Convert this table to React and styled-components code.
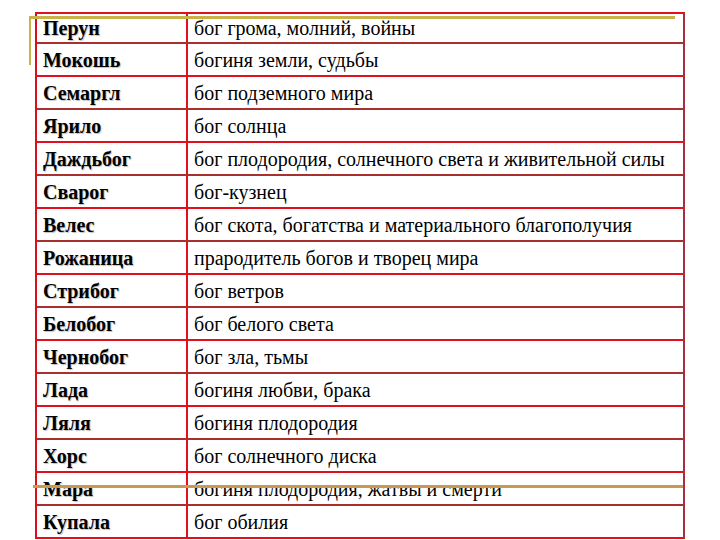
import React from 'react'
import styled, { createGlobalStyle } from 'styled-components'

const GlobalStyle = createGlobalStyle`
  html, body {
    margin: 0;
    padding: 0;
    background: #fff;
  }
  body {
    font-family: 'Liberation Serif', 'Times New Roman', serif;
    color: #000;
  }
`

const Page = styled.main`
  width: 720px;
  height: 540px;
  overflow: hidden;
  padding: 12px 0 0 35px;
  box-sizing: border-box;
`

const Frame = styled.div`
  position: relative;
  width: 650px;
`

const Table = styled.div`
  border-top: 2px solid #e0101e;
  border-left: 2px solid #d8101e;
  border-right: 2px solid #a8303a;
`

const Row = styled.div`
  display: grid;
  grid-template-columns: 151px 1fr;
  height: ${p => (p.$first ? 30 : 33)}px;
  box-sizing: border-box;
  border-bottom: 2px solid ${p => (p.$dark ? '#a8302e' : '#e0101e')};
`

const Cell = styled.div`
  display: flex;
  align-items: center;
  font-size: 20px;
  line-height: 1;
  white-space: nowrap;
`

const Name = styled(Cell)`
  padding-left: 6px;
  font-weight: bold;
  border-right: 2px solid #e0101e;
  text-shadow: 1px 1px 1px rgba(0, 0, 0, 0.25);
`

const Desc = styled(Cell)`
  padding-left: 6px;
`

// жёлтые полосы от подложенного слайда
const Stripe = styled.span`
  position: absolute;
  background: ${p => p.$color};
  left: ${p => p.$x}px;
  top: ${p => p.$y}px;
  width: ${p => p.$w}px;
  height: ${p => p.$h}px;
`

const gods = [
  ['Перун', 'бог грома, молний, войны'],
  ['Мокошь', 'богиня земли, судьбы'],
  ['Семаргл', 'бог подземного мира'],
  ['Ярило', 'бог солнца'],
  ['Даждьбог', 'бог плодородия, солнечного света и живительной силы'],
  ['Сварог', 'бог-кузнец'],
  ['Велес', 'бог скота, богатства и материального благополучия'],
  ['Рожаница', 'прародитель богов и творец мира'],
  ['Стрибог', 'бог ветров'],
  ['Белобог', 'бог белого света'],
  ['Чернобог', 'бог зла, тьмы'],
  ['Лада', 'богиня любви, брака'],
  ['Ляля', 'богиня плодородия'],
  ['Хорс', 'бог солнечного диска'],
  ['Мара', 'богиня плодородия, жатвы и смерти'],
  ['Купала', 'бог обилия'],
]

export default function App() {
  return (
    <Page>
      <GlobalStyle />
      <Frame>
        <Table>
          {gods.map(([name, desc], i) => (
            <Row key={name} $first={i === 0} $dark={i % 2 === 0}>
              <Name>{name}</Name>
              <Desc>{desc}</Desc>
            </Row>
          ))}
        </Table>
        <Stripe $color="#c9b24a" $x={-6} $y={4} $w={646} $h={3} />
        <Stripe $color="#c9b24a" $x={-6} $y={4} $w={2} $h={49} />
        <Stripe $color="#c99a52" $x={-2} $y={473} $w={650} $h={3} />
      </Frame>
    </Page>
  )
}
